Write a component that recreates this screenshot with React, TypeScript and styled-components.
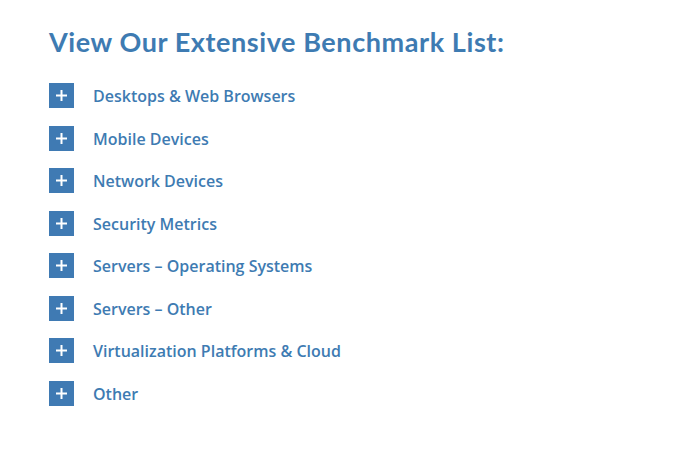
import React from "react";
import styled, { createGlobalStyle } from "styled-components";

const Global = createGlobalStyle`
  html, body { margin: 0; padding: 0; background: #ffffff; }
`;

const Page = styled.div`
  padding: 24px 0 0 49px;
  font-family: "Open Sans", "Liberation Sans", sans-serif;
`;

const Title = styled.h2`
  margin: 0 0 23px 0;
  font-family: "Lato", sans-serif;
  font-weight: 700;
  font-size: 27px;
  line-height: 36px;
  color: #3e7bb2;
  letter-spacing: 0.58px;
`;

const List = styled.ul`
  list-style: none;
  margin: 0;
  padding: 0;
  display: flex;
  flex-direction: column;
  gap: 17.5px;
`;

const Item = styled.li`
  display: flex;
  align-items: center;
  gap: 19px;
  height: 25px;
`;

const PlusBox = styled.span`
  width: 25px;
  height: 25px;
  background: #3f7ab3;
  display: flex;
  align-items: center;
  justify-content: center;
  flex-shrink: 0;
`;

const Label = styled.span`
  font-size: 16px;
  font-weight: 600;
  color: #3e7bb2;
  line-height: 25px;
  padding-top: 2px;
`;

const items = [
  "Desktops & Web Browsers",
  "Mobile Devices",
  "Network Devices",
  "Security Metrics",
  "Servers – Operating Systems",
  "Servers – Other",
  "Virtualization Platforms & Cloud",
  "Other",
];

const Plus = () => (
  <svg width="11" height="11" viewBox="0 0 11 11">
    <rect x="4.5" y="0" width="2" height="11" fill="#fff" />
    <rect x="0" y="4.5" width="11" height="2" fill="#fff" />
  </svg>
);

export default function App() {
  return (
    <>
      <Global />
      <Page>
        <Title>View Our Extensive Benchmark List:</Title>
        <List>
          {items.map((t) => (
            <Item key={t}>
              <PlusBox>
                <Plus />
              </PlusBox>
              <Label>{t}</Label>
            </Item>
          ))}
        </List>
      </Page>
    </>
  );
}
